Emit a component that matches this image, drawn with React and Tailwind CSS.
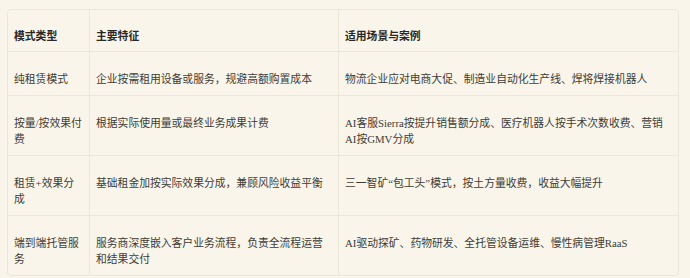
import React from 'react';

const rows = [
    {
        type: '纯租赁模式',
        feature: '企业按需租用设备或服务，规避高额购置成本',
        cases: '物流企业应对电商大促、制造业自动化生产线、焊将焊接机器人',
        tall: false,
    },
    {
        type: ['按量/按效果付', '费'],
        feature: '根据实际使用量或最终业务成果计费',
        cases: ['AI客服Sierra按提升销售额分成、医疗机器人按手术次数收费、营销', 'AI按GMV分成'],
        tall: true,
    },
    {
        type: ['租赁+效果分', '成'],
        feature: '基础租金加按实际效果分成，兼顾风险收益平衡',
        cases: '三一智矿“包工头”模式，按土方量收费，收益大幅提升',
        tall: true,
    },
    {
        type: ['端到端托管服', '务'],
        feature: ['服务商深度嵌入客户业务流程，负责全流程运营', '和结果交付'],
        cases: 'AI驱动探矿、药物研发、全托管设备运维、慢性病管理RaaS',
        tall: true,
    },
];

const Lines = ({ value }) =>
    Array.isArray(value) ? (
        <>
            {value.map((line, i) => (
                <span key={i} className="block whitespace-nowrap">{line}</span>
            ))}
        </>
    ) : (
        <span className="whitespace-nowrap">{value}</span>
    );

const Cell = ({ children, head, first, last, col }) => (
    <div
        className={`px-[6px] ${head ? 'pt-[18px] pb-[7px] font-bold text-[#2a2724]' : 'pt-[19px] pb-[8px] text-[#403c37]'} ${
            col > 0 ? 'border-l border-[#ede7da]' : ''
        } ${last ? '' : 'border-b border-[#ede7da]'}`}
    >
        {children}
    </div>
);

export default function App() {
    return (
        <div
            className="w-[690px] h-[278px] bg-[#f9f5ea] pt-[9px] pl-[7px]"
            style={{ fontFamily: '"Liberation Serif", "Noto Sans CJK SC", serif' }}
        >
            <div className="w-[672px] rounded-[4px] border border-[#ede7da] bg-[#f9f5ea] text-[10.8px] leading-[16px] grid grid-cols-[81px_249px_1fr]">
                <Cell head col={0}>模式类型</Cell>
                <Cell head col={1}>主要特征</Cell>
                <Cell head col={2}>适用场景与案例</Cell>
                {rows.map((r, i) => {
                    const last = i === rows.length - 1;
                    return (
                        <React.Fragment key={i}>
                            <Cell col={0} last={last}><Lines value={r.type} /></Cell>
                            <Cell col={1} last={last}><Lines value={r.feature} /></Cell>
                            <Cell col={2} last={last}><Lines value={r.cases} /></Cell>
                        </React.Fragment>
                    );
                })}
            </div>
        </div>
    );
}
